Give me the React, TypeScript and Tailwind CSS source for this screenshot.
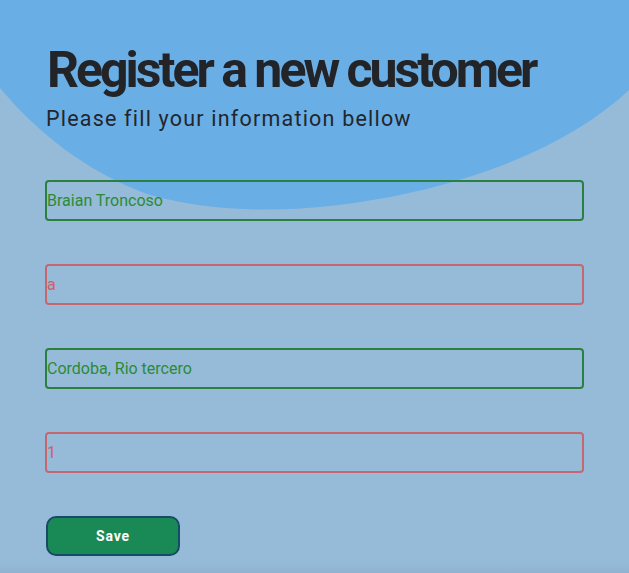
const fields = [
    { value: "Braian Troncoso", valid: true },
    { value: "a", valid: false },
    { value: "Cordoba, Rio tercero", valid: true },
    { value: "1", valid: false },
]

const Blob = () => (
    <svg
        className="pointer-events-none absolute left-0 top-0"
        width="629"
        height="220"
        viewBox="0 0 629 220"
    >
        <path
            d="M0 0 H629 V90 C565 150 455 192 330 206 C265 213 205 210 150 195 C85 172 35 130 0 88 Z"
            fill="#6aaee6"
        />
    </svg>
)

const App = () => {
    return (
        <div
            className="relative flex h-[573px] w-full flex-col overflow-hidden bg-[#96bbd8]"
            style={{ fontFamily: "Roboto, 'Liberation Sans', sans-serif" }}
        >
            <Blob />
            <div className="relative flex flex-col px-[45px] pt-[45px]">
                <h1 className="ml-[2px] text-[50px] font-bold leading-[50px] tracking-[-3px] text-[#222427]">
                    Register a new customer
                </h1>
                <p className="ml-[1px] mt-[9px] text-[21.5px] leading-[30px] tracking-[1.2px] text-[#22262b]">
                    Please fill your information bellow
                </p>
                <form className="mt-[46px] flex flex-col gap-[43px]" onSubmit={(e) => e.preventDefault()}>
                    {fields.map((f, i) => (
                        <input
                            key={i}
                            defaultValue={f.value}
                            className={
                                f.valid
                                    ? "h-[41px] w-[539px] rounded-[4px] border-2 border-[#2b8040] bg-transparent px-0 text-[16px] text-[#2c8a35] outline-none"
                                    : "h-[41px] w-[539px] rounded-[4px] border-2 border-[#c6666f] bg-transparent px-0 text-[16px] text-[#cf5f68] outline-none"
                            }
                        />
                    ))}
                    <button
                        type="submit"
                        className="ml-[1px] h-[40px] w-[134px] rounded-[10px] border-2 border-[#174a66] bg-[#198a55] text-[14px] font-bold tracking-[0.8px] text-white"
                    >
                        Save
                    </button>
                </form>
            </div>
            <div className="mt-auto h-[11px] bg-gradient-to-b from-[#96bbd8] to-[#8fb3d0]" />
        </div>
    )
}

export default App
